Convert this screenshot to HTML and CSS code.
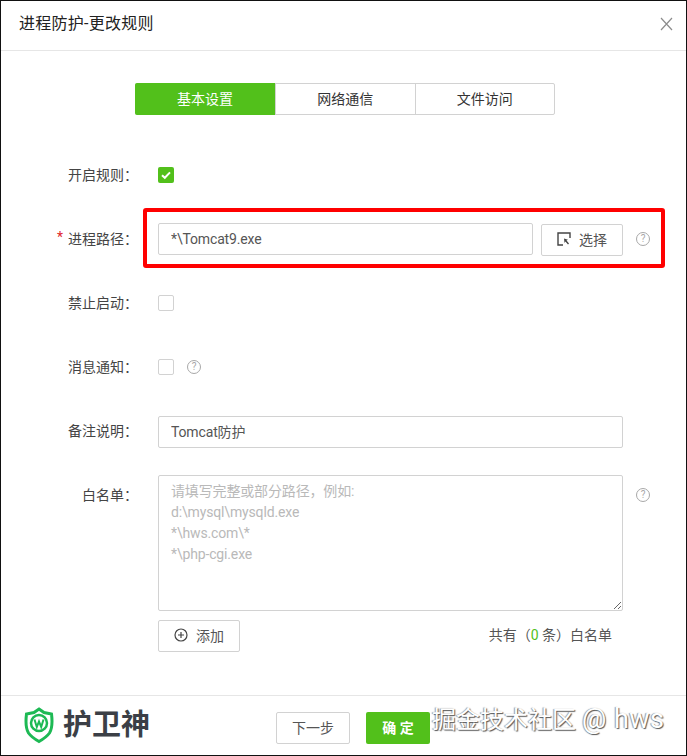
FILE: index.html
```html
<!DOCTYPE html>
<html lang="zh-CN">
<head>
    <meta charset="UTF-8">
    <meta name="viewport" content="width=device-width, initial-scale=1.0">
    <title>进程防护-更改规则</title>
    <link rel="stylesheet" href="styles.css">
</head>
<body>

<div class="dialog">
    <div class="header">
        <h1>进程防护-更改规则</h1>
        <svg class="close" width="13" height="14" viewBox="0 0 13 14"><path d="M1 1l11 12M12 1L1 13" fill="none" stroke="#8c8c8c" stroke-width="1.2"/></svg>
    </div>

    <div class="content">
        <div class="tabs">
            <div class="tab active">基本设置</div>
            <div class="tab">网络通信</div>
            <div class="tab">文件访问</div>
        </div>

        <div class="row first">
            <label class="name">开启规则：</label>
            <span class="check on">
                <svg width="12" height="12" viewBox="0 0 12 12"><path d="M2 6.200l2.800 2.600L10 3.400" fill="none" stroke="#fff" stroke-width="2"/></svg>
            </span>
        </div>

        <div class="row">
            <label class="name"><i class="star">*</i>进程路径：</label>
            <input class="text path" type="text" value="*\Tomcat9.exe">
            <button class="btn pick">
                <svg width="14" height="14" viewBox="0 0 14 14"><path d="M13 6V1H1v12h5" fill="none" stroke="#444" stroke-width="1.400"/><path d="M7 6.500l4 1.300-1.500.8 2.500 3-1 1-2.600-3-.9 1.500z" fill="#444"/></svg>
                选择
            </button>
            <span class="help">?</span>
        </div>

        <div class="row">
            <label class="name">禁止启动：</label>
            <span class="check"></span>
        </div>

        <div class="row before-note">
            <label class="name">消息通知：</label>
            <span class="check"></span>
            <span class="help">?</span>
        </div>

        <div class="row note">
            <label class="name">备注说明：</label>
            <input class="text wide" type="text" value="Tomcat防护">
        </div>

        <div class="row list">
            <label class="name">白名单：</label>
            <textarea class="area" placeholder="请填写完整或部分路径，例如:
d:\mysql\mysqld.exe
*\hws.com\*
*\php-cgi.exe"></textarea>
            <span class="help">?</span>
        </div>

        <div class="list-foot">
            <button class="btn add">
                <svg width="14" height="14" viewBox="0 0 14 14"><circle cx="7" cy="7" r="6" fill="none" stroke="#444" stroke-width="1.200"/><path d="M4 7h6M7 4v6" stroke="#444" stroke-width="1.200"/></svg>
                添加
            </button>
            <span class="count">共有（<b>0</b> 条）白名单</span>
        </div>
    </div>

    <div class="footer">
        <div class="logo">
            <svg width="30" height="37" viewBox="0 0 30 37">
                <path d="M15 2l5 3.500 7.500 1.500c1 8 1 14-2 19-2.500 3.500-6 6-10.500 8.500C10.500 32 7 29.500 4.500 26c-3-5-3-11-2-19L10 5.500z" fill="none" stroke="#1db954" stroke-width="3"/>
                <circle cx="15" cy="16" r="8" fill="none" stroke="#1db954" stroke-width="2.500"/>
                <path d="M10.500 12.500l2.300 7.500L15 14.500l2.200 5.500 2.300-7.500" fill="none" stroke="#1db954" stroke-width="2"/>
            </svg>
            <span>护卫神</span>
        </div>
        <div class="actions">
            <button class="btn next">下一步</button>
            <button class="btn ok">确 定</button>
        </div>
    </div>

    <div class="mark"></div>
    <div class="watermark">掘金技术社区 <span>@ hws</span></div>
</div>

</body>
</html>
```

FILE: styles.css
```css
* {
    box-sizing: border-box;
}
html, body {
    margin: 0;
    height: 100%;
}
body {
    font-family: Roboto, "Noto Sans CJK SC", sans-serif;
    font-size: 14px;
    color: #555;
    background-color: #fff;
}
.dialog {
    position: relative;
    width: 687px;
    height: 756px;
    border: 1px solid #111;
    display: flex;
    flex-direction: column;
}
.header {
    height: 50px;
    flex: none;
    display: flex;
    align-items: center;
    justify-content: space-between;
    padding: 0 13px 4px 18px;
    border-bottom: 1px solid #e6e6e6;
}
h1 {
    margin: -4px 0 0;
    font-size: 16px;
    font-weight: 400;
    letter-spacing: .25px;
    color: #222;
}
.content {
    flex: 1;
    padding: 32px 0 0 0;
}
.tabs {
    display: flex;
    width: 420px;
    height: 32px;
    margin-left: 134px;
    margin-bottom: 44px;
    border: 1px solid #d2d2d2;
    border-radius: 2px;
}
.tab {
    flex: 1;
    line-height: 30px;
    text-align: center;
    color: #333;
    border-left: 1px solid #d2d2d2;
}
.tab.active {
    flex: none;
    width: 140px;
    margin: -1px 0 -1px -1px;
    line-height: 32px;
    background-color: #52c01b;
    color: #fff;
    border-left: 0;
    border-radius: 2px 0 0 2px;
}
.row {
    display: flex;
    align-items: center;
    height: 32px;
    margin-bottom: 32px;
}
.row.before-note {
    margin-bottom: 33px;
}
.row.note {
    margin-bottom: 27px;
}
.name {
    position: relative;
    width: 157px;
    flex: none;
    margin-top: -2px;
    padding-left: 67px;
    color: #444;
    white-space: nowrap;
}
.note .name {
    margin-top: -4px;
}
.star {
    position: absolute;
    left: 56px;
    top: 1px;
    font-style: normal;
    color: #e0252b;
}
.check {
    display: flex;
    align-items: center;
    justify-content: center;
    width: 16px;
    height: 16px;
    border: 1px solid #d2d2d2;
    border-radius: 2px;
}
.check.on {
    border: 0;
    background-color: #52c01b;
}
.text, .area {
    font-family: inherit;
    font-size: 14px;
    letter-spacing: -.15px;
    color: #555;
    border: 1px solid #d2d2d2;
    border-radius: 2px;
    background-color: #fff;
    padding: 0 12px;
    outline: none;
}
.text {
    height: 32px;
}
.note .text {
    padding-bottom: 3px;
}
.path {
    width: 375px;
}
.wide {
    width: 465px;
}
.btn {
    font-family: inherit;
    font-size: 14px;
    height: 32px;
    color: #555;
    background-color: #fff;
    border: 1px solid #d2d2d2;
    border-radius: 2px;
    display: inline-flex;
    align-items: center;
    justify-content: center;
    gap: 8px;
    padding: 0 0 2px;
}
.pick {
    width: 82px;
    margin-left: 8px;
    margin-top: 1px;
}
.help {
    width: 14px;
    height: 14px;
    margin-left: 13px;
    border: 1px solid #a8a8a8;
    border-radius: 50%;
    font-size: 10px;
    line-height: 12px;
    text-align: center;
    color: #a8a8a8;
}
.row.list {
    height: auto;
    align-items: flex-start;
    margin-bottom: 9px;
}
.list .name {
    margin-top: 0;
    padding-left: 81px;
    padding-top: 9px;
}
.list .help {
    margin-top: 13px;
}
.area {
    display: block;
    width: 465px;
    height: 136px;
    padding: 5px 12px;
    line-height: 21px;
}
.area::placeholder {
    color: #b9b9b9;
    opacity: 1;
}
.list-foot {
    display: flex;
    align-items: center;
    justify-content: space-between;
    width: 454px;
    margin-left: 157px;
}
.add {
    width: 82px;
}
.count {
    margin-top: -4px;
}
.count b {
    font-weight: 400;
    color: #52c01b;
}
.footer {
    flex: none;
    height: 60px;
    display: flex;
    align-items: center;
    border-top: 1px solid #e6e6e6;
    padding: 0 0 0 23px;
}
.logo {
    display: flex;
    align-items: center;
    gap: 9px;
    width: 252px;
    font-size: 29px;
    font-weight: 700;
    color: #3b3f46;
    line-height: 1;
}
.actions {
    display: flex;
    gap: 16px;
    margin-top: 5px;
}
.next {
    width: 74px;
}
.ok {
    width: 64px;
    border: 0;
    background-color: #52c01b;
    color: #fff;
    font-weight: 700;
}
.mark {
    position: absolute;
    left: 142px;
    top: 207px;
    width: 522px;
    height: 60px;
    border: 4px solid #f00;
    border-radius: 3px;
    pointer-events: none;
}
.watermark {
    position: absolute;
    left: 431px;
    top: 701px;
    font-size: 24px;
    line-height: 34px;
    color: #fff;
    white-space: nowrap;
    text-shadow: 1px 1px 1px #555, -1px 0 1px #999;
}
.watermark span {
    font-size: 27px;
    letter-spacing: .5px;
}
```
